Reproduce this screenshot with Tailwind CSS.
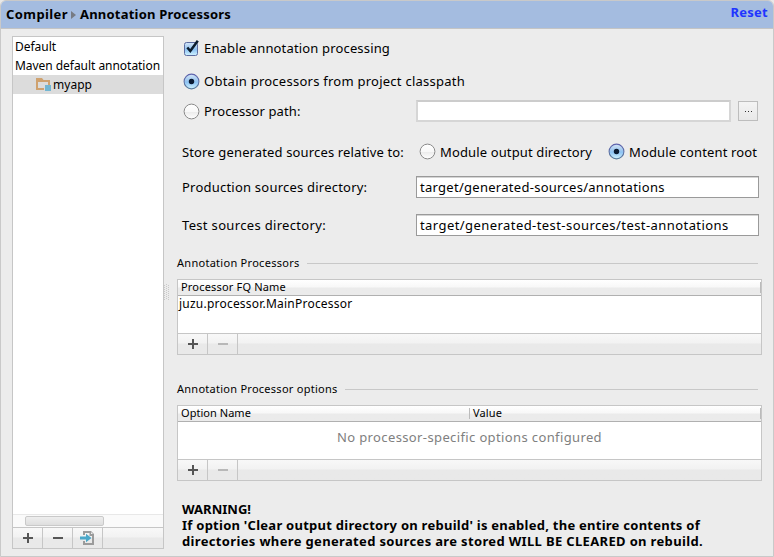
<!DOCTYPE html>
<html lang="en">
<head>
<meta charset="utf-8">
<title>Annotation Processors</title>
<script src="https://cdn.jsdelivr.net/npm/@tailwindcss/browser@4"></script>
</head>
<body class="bg-[#e8e8e8] w-[774px] h-[557px] overflow-hidden font-['Noto_Sans',sans-serif] text-[13px] leading-4 text-black whitespace-nowrap">
<svg class="absolute w-0 h-0" aria-hidden="true">
  <defs>
    <linearGradient id="blue" x1="0" y1="0" x2="0" y2="1"><stop offset="0" stop-color="#d5e6f8"/><stop offset=".45" stop-color="#9bc6ef"/><stop offset=".55" stop-color="#8dc3f3"/><stop offset="1" stop-color="#d2f4ff"/></linearGradient>
    <linearGradient id="ring" x1="0" y1="0" x2="0" y2="1"><stop offset="0" stop-color="#5f63ad"/><stop offset="1" stop-color="#5b7d9d"/></linearGradient>
    <linearGradient id="white" x1="0" y1="0" x2="0" y2="1"><stop offset="0" stop-color="#fff"/><stop offset=".5" stop-color="#f8f8f8"/><stop offset=".55" stop-color="#ececec"/><stop offset="1" stop-color="#fff"/></linearGradient>
    <symbol id="on" viewBox="0 0 17 17"><circle cx="8.5" cy="8.5" r="7.4" fill="url(#blue)" stroke="url(#ring)" stroke-width="1.1"/><circle cx="8.5" cy="8.5" r="2.7" fill="#0b1b33"/></symbol>
    <symbol id="off" viewBox="0 0 17 17"><circle cx="8.5" cy="8.5" r="7.4" fill="url(#white)" stroke="#8a8a8a" stroke-width="1"/></symbol>
    <symbol id="plus" viewBox="0 0 12 12"><path d="M6 1v10M1 6h10" fill="none" stroke="currentColor" stroke-width="2"/></symbol>
    <symbol id="minus" viewBox="0 0 12 12"><path d="M1 6h10" fill="none" stroke="currentColor" stroke-width="2"/></symbol>
  </defs>
</svg>
<div class="w-full h-full flex flex-col bg-[#ececec] border border-[#c9c9c9] rounded-t-[6px] overflow-hidden">
  <header class="h-7 shrink-0 bg-[#a4bce0] border-b border-[#c4c4c4] flex items-center font-bold pl-[5px] pr-[5px]">
    <span class="tracking-[0.41px] w-[65px] pb-px">Compiler</span>
    <svg class="w-[5px] h-[8px] mr-1" viewBox="0 0 5 8"><path d="M0 0L5 4L0 8Z" fill="#777b83"/></svg>
    <span class="tracking-[0.21px] pb-px">Annotation Processors</span>
    <span class="ml-auto text-[#1f35ff] tracking-[0.26px] pb-[5px]">Reset</span>
  </header>
  <div class="flex flex-1 min-h-0">
    <aside class="ml-[11px] mt-[7px] w-[152px] h-[513px] border border-[#c6c6c6] bg-white flex flex-col text-[12px]">
      <div class="h-[19px] pl-[2px] flex items-center tracking-[-0.03px]">Default</div>
      <div class="h-[19px] pl-[2px] flex items-center tracking-[-0.04px]">Maven default annotation</div>
      <div class="h-[19px] pl-[23px] flex items-center bg-[#dcdcdc]">
        <svg class="w-[15px] h-[13px] mr-[2px]" viewBox="0 0 15 13"><path d="M0 0h6l1.5 2H14v5h-2V4H2v6h6v2H0Z" fill="#cfa26f"/><path d="M9 7h6v6H9Z" fill="#72b6d2"/></svg>
        <span class="tracking-[0.03px]">myapp</span>
      </div>
      <div class="flex-1"></div>
      <div class="h-[13px] border-t border-[#e8e8e8] bg-[#fafafa] pl-[12px] pt-px"><div class="w-[79px] h-[10px] rounded-[2px] border border-[#c9c9c9] bg-linear-to-b from-[#eeeeee] to-[#dedede]"></div></div>
      <div class="h-[21px] border-t border-[#c6c6c6] bg-linear-to-b from-[#f8f8f8] from-0% via-[#f2f2f2] via-45% to-[#e9e9e9] to-50% flex text-[#555]">
        <div class="w-[30px] border-r border-[#c6c6c6] flex items-center justify-center"><svg class="w-3 h-3"><use href="#plus"/></svg></div>
        <div class="w-[30px] border-r border-[#c6c6c6] flex items-center justify-center"><svg class="w-3 h-3"><use href="#minus"/></svg></div>
        <div class="w-[30px] border-r border-[#c6c6c6] flex items-center justify-center"><svg class="w-[15px] h-[16px]" viewBox="0 0 15 16"><path d="M4 5V2h6M4 11v3h9V5" fill="none" stroke="#9b9b9b" stroke-width="2"/><path d="M9.5 1H11l3 3v2H9.5Z" fill="#9b9b9b"/><path d="M11 2v2h2Z" fill="#eee"/><path d="M0 6.5h6V3.7L11.5 8L6 12.3V9.5H0Z" fill="#4ba8c9"/></svg></div>
      </div>
    </aside>
    <div class="w-[13px] pt-[255px] pl-0"><svg class="w-[5px] h-[16px]" viewBox="0 0 5 16"><path d="M.5 1v15M4.5 1v15" stroke="#c9c9c9" stroke-dasharray="1 1"/><path d="M2.5 0v16" stroke="#c9c9c9" stroke-dasharray="1 1"/></svg></div>
    <main class="w-[585px] flex flex-col">
      <div class="h-[38px] pl-[6px] flex items-center">
        <svg class="w-[17px] h-[17px] mr-[4px] -mt-[2px] overflow-visible" viewBox="0 0 17 17"><rect x="1.5" y="3.5" width="13" height="13" rx="2" fill="url(#blue)" stroke="#5c6ca0"/><path d="M4.3 8.5L7.3 12L14.8 1.8" fill="none" stroke="#0b1b2b" stroke-width="2.5"/></svg>
        <span class="tracking-[0.16px]">Enable annotation processing</span>
      </div>
      <div class="h-[28px] pl-[6px] flex items-center"><svg class="w-[17px] h-[17px] mr-[4px]"><use href="#on"/></svg><span class="tracking-[0.25px]">Obtain processors from project classpath</span></div>
      <div class="h-[32px] pl-[6px] flex items-center">
        <svg class="w-[17px] h-[17px] mr-[4px]"><use href="#off"/></svg><span class="tracking-[0.1px] w-[212px]">Processor path:</span>
        <div class="w-[315px] h-[22px] bg-white border-2 border-[#d6d6d6] border-t-[#cccccc]"></div>
        <div class="ml-[7px] w-[20px] h-[20px] border border-[#bdbdbd] bg-linear-to-b from-[#f4f4f4] to-[#e8e8e8] flex items-center justify-center"><svg class="w-[9px] h-px" viewBox="0 0 9 1"><path d="M1 0h1v1H1ZM4 0h1v1H4ZM7 0h1v1H7Z" fill="#333"/></svg></div>
      </div>
      <div class="h-[49px] pl-[5px] flex items-center">
        <span class="tracking-[0.14px] w-[237px]">Store generated sources relative to:</span>
        <svg class="w-[17px] h-[17px] mr-[4px]"><use href="#off"/></svg><span class="tracking-[0.13px] w-[168px]">Module output directory</span>
        <svg class="w-[17px] h-[17px] mr-[4px]"><use href="#on"/></svg><span class="tracking-[0.13px]">Module content root</span>
      </div>
      <div class="h-[22px] pl-[5px] flex items-center">
        <span class="tracking-[0.22px] w-[234px]">Production sources directory:</span>
        <div class="w-[343px] h-[22px] bg-white border border-[#9a9a9a] pl-[3px] flex items-center tracking-[0.28px] shadow-[inset_0_1px_0_#d5d5d5]">target/generated-sources/annotations</div>
      </div>
      <div class="h-[22px] mt-4 pl-[5px] flex items-center">
        <span class="tracking-[0.33px] w-[234px]">Test sources directory:</span>
        <div class="w-[343px] h-[22px] bg-white border border-[#9a9a9a] pl-[3px] flex items-center tracking-[0.43px] shadow-[inset_0_1px_0_#d5d5d5]">target/generated-test-sources/test-annotations</div>
      </div>
      <div class="mt-[19px] h-4 flex items-center text-[11px] pr-[4px]"><span class="tracking-[0.28px] w-[130px]">Annotation Processors</span><div class="flex-1 h-px bg-[#c8c8c8]"></div></div>
      <section class="mt-2 h-[76px] border border-[#c6c6c6] bg-white flex flex-col">
        <div class="h-[16px] shrink-0 pl-[3px] border-b border-[#b0b0b0] text-[11px] flex items-center bg-linear-to-b from-white via-[#f8f8f8] via-45% to-[#ebebeb] to-55%"><span class="tracking-[0.18px] pb-px">Processor FQ Name</span><div class="ml-auto w-px h-[11px] bg-[#bbb]"></div></div>
        <div class="flex-1 pl-px text-[12px] tracking-[0.22px]">juzu.processor.MainProcessor</div>
        <div class="h-[21px] border-t border-[#c6c6c6] bg-linear-to-b from-[#f8f8f8] from-0% via-[#f2f2f2] via-45% to-[#e9e9e9] to-50% flex text-[#555]">
          <div class="w-[30px] border-r border-[#c6c6c6] flex items-center justify-center"><svg class="w-3 h-3"><use href="#plus"/></svg></div>
          <div class="w-[30px] border-r border-[#c6c6c6] flex items-center justify-center text-[#b8b8b8]"><svg class="w-3 h-3"><use href="#minus"/></svg></div>
        </div>
      </section>
      <div class="mt-[26px] h-4 flex items-center text-[11px] pr-[4px]"><span class="tracking-[0.26px] w-[168px]">Annotation Processor options</span><div class="flex-1 h-px bg-[#c8c8c8]"></div></div>
      <section class="mt-2 h-[76px] border border-[#c6c6c6] bg-white flex flex-col">
        <div class="h-[16px] shrink-0 pl-[3px] border-b border-[#b0b0b0] text-[11px] flex items-center bg-linear-to-b from-white via-[#f8f8f8] via-45% to-[#ebebeb] to-55%"><span class="tracking-[0.04px] w-[288px] pb-px">Option Name</span><div class="w-px h-[11px] bg-[#bbb] mr-[3px]"></div><span class="tracking-[0.12px] pb-px">Value</span><div class="ml-auto w-px h-[11px] bg-[#bbb]"></div></div>
        <div class="flex-1 flex items-center justify-center text-[#808080] tracking-[0.375px] pb-[8px]">No processor-specific options configured</div>
        <div class="h-[21px] border-t border-[#c6c6c6] bg-linear-to-b from-[#f8f8f8] from-0% via-[#f2f2f2] via-45% to-[#e9e9e9] to-50% flex text-[#555]">
          <div class="w-[30px] border-r border-[#c6c6c6] flex items-center justify-center"><svg class="w-3 h-3"><use href="#plus"/></svg></div>
          <div class="w-[30px] border-r border-[#c6c6c6] flex items-center justify-center text-[#b8b8b8]"><svg class="w-3 h-3"><use href="#minus"/></svg></div>
        </div>
      </section>
      <div class="mt-5 pl-[5px] font-bold leading-4">
        <p class="tracking-[0.02px]">WARNING!</p>
        <p class="tracking-[0.258px]">If option 'Clear output directory on rebuild' is enabled, the entire contents of</p>
        <p class="tracking-[0.344px]">directories where generated sources are stored WILL BE CLEARED on rebuild.</p>
      </div>
    </main>
  </div>
</div>
</body>
</html>
